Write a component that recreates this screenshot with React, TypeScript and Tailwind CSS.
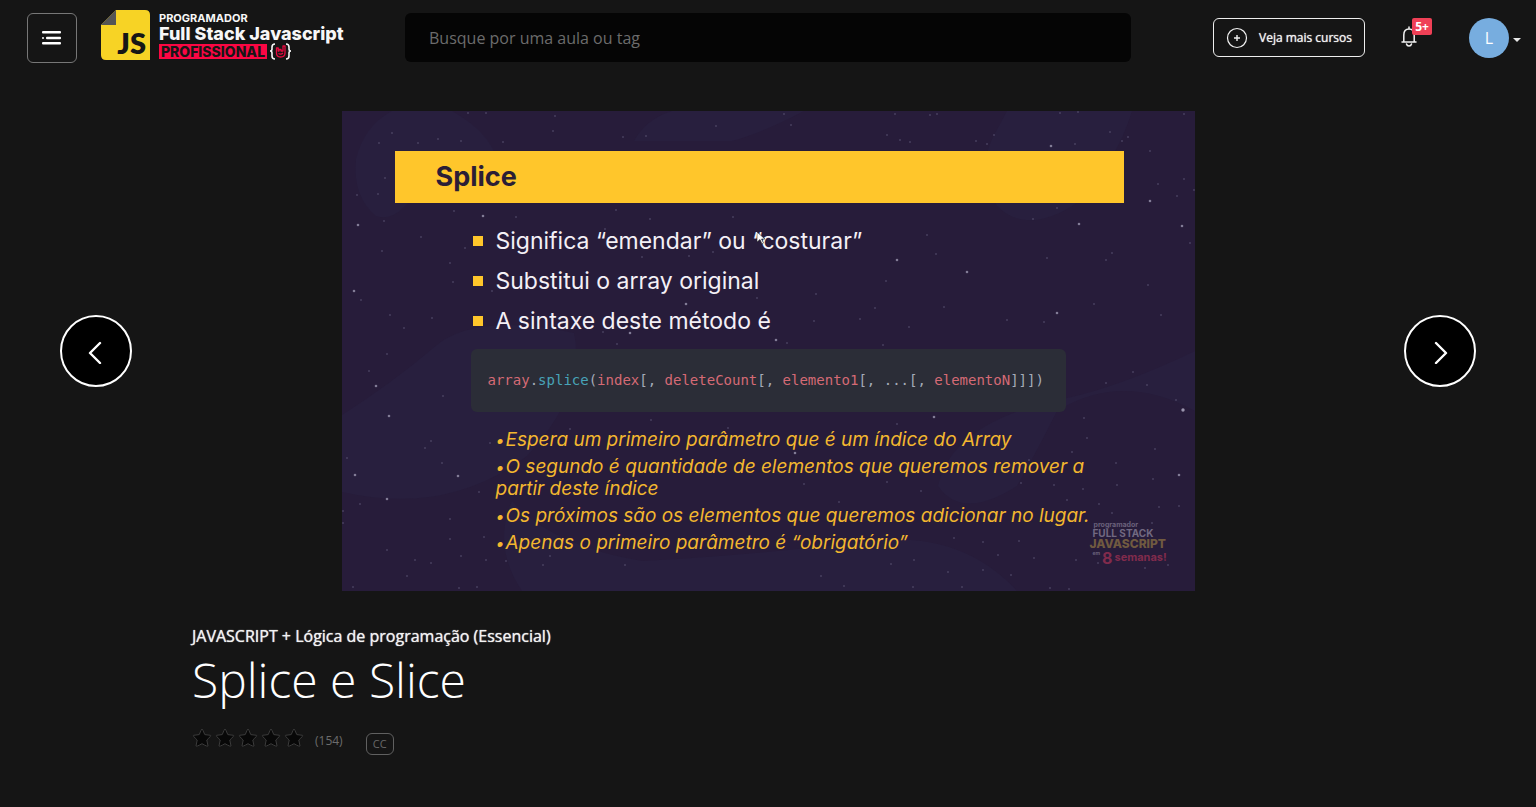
import type { ReactNode } from "react";

type Dot = [number, number, number];

const STARS: Dot[] = [
  [50, 22, 1], [37, 32, 1], [76, 32, 1], [96, 28, 1], [119, 30, 1], [126, 2, 1], [144, 2, 1], [211, 20, 1], [281, 26, 1], [374, 15, 1],
  [304, 25, 1], [213, 5, 1], [161, 31, 1], [43, 67, 1], [15, 84, 1], [36, 83, 1], [16, 114, 2], [42, 110, 1], [79, 126, 1], [112, 100, 1],
  [141, 105, 2], [174, 106, 1], [274, 99, 1], [308, 108, 1], [391, 106, 1], [263, 118, 1], [300, 146, 1], [347, 145, 1], [371, 141, 1],
  [12, 180, 2], [19, 189, 1], [48, 204, 1], [62, 217, 1], [90, 207, 1], [108, 152, 1], [111, 171, 1], [150, 180, 1], [344, 193, 2],
  [415, 187, 1], [261, 221, 1], [288, 222, 2], [275, 233, 1], [40, 140, 1], [123, 137, 1],
  [449, 14, 1], [442, 3, 1], [553, 3, 1], [588, 4, 1], [595, 3, 1], [718, 2, 1], [736, 1, 1], [842, 3, 1], [558, 29, 1], [545, 24, 1],
  [568, 31, 1], [634, 30, 1], [645, 33, 1], [652, 24, 1], [709, 35, 2], [733, 33, 1], [768, 21, 1], [780, 30, 1], [786, 26, 1],
  [808, 40, 1], [816, 73, 1], [808, 90, 2], [835, 85, 1], [842, 68, 1], [852, 79, 1], [737, 113, 2], [840, 115, 2], [848, 132, 1],
  [715, 97, 1], [691, 108, 1], [585, 124, 1], [555, 149, 2], [594, 143, 1], [625, 161, 2], [544, 170, 1], [474, 183, 1], [533, 197, 1],
  [602, 196, 1], [518, 208, 1], [567, 216, 1], [541, 234, 1], [665, 209, 1], [702, 211, 1], [715, 202, 2], [770, 142, 1],
  [764, 149, 1], [806, 174, 1], [819, 204, 1], [752, 193, 1], [705, 147, 1], [472, 210, 1], [445, 232, 1], [434, 229, 2],
  [45, 243, 1], [27, 260, 1], [34, 275, 2], [47, 305, 2], [101, 285, 1], [83, 337, 1], [89, 330, 1], [5, 347, 1], [13, 364, 2],
  [116, 365, 2], [100, 352, 1], [45, 388, 2], [18, 393, 1], [1, 400, 1], [1, 412, 1], [137, 381, 1], [144, 449, 1], [309, 309, 1],
  [228, 318, 1], [386, 317, 1], [148, 332, 1], [108, 408, 1], [108, 428, 1], [142, 426, 1], [45, 439, 1], [73, 449, 1], [89, 452, 1],
  [119, 445, 1], [164, 450, 1], [208, 445, 1], [201, 454, 1], [283, 454, 1], [117, 477, 1], [135, 476, 1], [65, 465, 1], [11, 476, 1],
  [592, 306, 2], [555, 313, 1], [453, 342, 2], [462, 373, 1], [497, 391, 1], [545, 371, 1], [579, 380, 1], [687, 349, 1], [679, 372, 1],
  [712, 374, 1], [741, 378, 1], [725, 389, 1], [774, 352, 1], [730, 341, 1], [745, 327, 1], [742, 307, 1], [805, 274, 1], [791, 261, 1],
  [764, 272, 1], [834, 289, 1], [841, 299, 3], [813, 338, 1], [837, 364, 2], [811, 368, 1], [775, 374, 1], [837, 395, 1], [817, 396, 1],
  [770, 402, 1], [810, 412, 1], [757, 393, 1], [612, 427, 1], [641, 431, 1], [677, 430, 1], [656, 444, 1], [692, 447, 1],
  [734, 449, 1], [756, 452, 1], [803, 457, 1], [826, 454, 1], [549, 453, 1], [572, 449, 1], [606, 461, 1], [641, 459, 1], [669, 464, 1],
  [479, 465, 1], [571, 476, 1], [620, 476, 1], [708, 477, 1], [727, 478, 1], [502, 475, 1],
];

const DOT_LOOK = ["", "#5e5876", "#827c96", "#9a94ad"];
const DOT_RADIUS = [0, 0.8, 1.3, 1.7];

const BULLETS = ["Significa “emendar” ou “costurar”", "Substitui o array original", "A sintaxe deste método é"];

const NOTES = [
  "Espera um primeiro parâmetro que é um índice do Array",
  "O segundo é quantidade de elementos que queremos remover a partir deste índice",
  "Os próximos são os elementos que queremos adicionar no lugar.",
  "Apenas o primeiro parâmetro é “obrigatório”",
];

function Logo() {
  return (
    <a href="#" className="flex items-start gap-2 text-[#f7f7f7]" aria-label="Full Stack Javascript">
      <span className="relative block h-[50px] w-[50px] shrink-0">
        <svg viewBox="0 0 50 50" className="absolute inset-0" aria-hidden="true">
          <path d="M15 0H44Q49 0 49 5V50H5Q0 50 0 45V15Z" fill="#f7d325" />
          <path d="M15 0V15H0Z" fill="#555" />
        </svg>
        <span className="absolute right-[5px] bottom-[5px] font-['Lato',sans-serif] text-[29px] leading-6 font-extrabold text-[#161616]">JS</span>
      </span>
      <span className="flex flex-col font-['Inter',sans-serif] font-bold whitespace-nowrap">
        <span className="mt-[2px] text-[11px] leading-3">PROGRAMADOR</span>
        <span className="text-[18px] leading-[19px] font-extrabold">Full Stack Javascript</span>
        <span className="flex items-center gap-[2px]">
          <span className="w-[108px] bg-[#fb0743] text-center text-[14px] leading-[15px] font-extrabold text-[#161616]">PROFISSIONAL</span>
          <svg width="23" height="17" viewBox="0 0 23 17" fill="none" aria-hidden="true">
            <path d="M6 1Q3 1 3 4V6Q3 8 1 8Q3 8 3 10V13Q3 16 6 16" stroke="#f7f7f7" strokeWidth="1.6" />
            <path d="M17 1Q20 1 20 4V6Q20 8 22 8Q20 8 20 10V13Q20 16 17 16" stroke="#f7f7f7" strokeWidth="1.6" />
            <path d="M7.500 5V10Q7.500 14 11.500 14Q16 14 16 10V3H14V8H12V6.500H10V8H9.200V5Z" stroke="#e80a40" strokeWidth="1.3" strokeLinejoin="round" />
            <path d="M9.500 10.500Q12 12 14 10" stroke="#e80a40" strokeWidth="1.3" />
          </svg>
        </span>
      </span>
    </a>
  );
}

function Header() {
  return (
    <header className="flex items-start pt-[10px] pr-[15px] pl-[27px]">
      <button type="button" aria-label="Menu" className="mt-[3px] mr-6 flex h-[50px] w-[50px] shrink-0 items-center justify-center rounded-md border border-[#777]">
        <svg width="20" height="14" viewBox="0 0 20 14" fill="#fff" aria-hidden="true">
          <rect x="0" y="0" width="19" height="2.400" rx="1" />
          <rect x="0" y="6" width="2" height="2" rx="1" />
          <rect x="4" y="5.800" width="15" height="2.400" rx="1" />
          <rect x="0" y="11" width="19" height="2.400" rx="1" />
        </svg>
      </button>
      <div className="w-[304px] shrink-0">
        <Logo />
      </div>
      <input
        type="search"
        aria-label="Busque por uma aula ou tag"
        placeholder="Busque por uma aula ou tag"
        className="mt-[3px] h-[49px] min-w-0 flex-1 rounded-md bg-[#050505] px-6 text-[16px] text-white placeholder:text-[#6c6c6c] placeholder:opacity-100"
      />
      <button type="button" className="mt-2 ml-[82px] flex h-[39px] w-[152px] shrink-0 items-center gap-[11px] rounded-md border border-[#eee] pl-3 text-[12px] font-medium whitespace-nowrap text-[#f2f2f2] [text-shadow:0_0_1px_#f2f2f2]">
        <svg width="22" height="22" viewBox="0 0 22 22" fill="none" stroke="#f2f2f2" aria-hidden="true">
          <circle cx="11" cy="11" r="9.500" strokeWidth="1.2" />
          <path d="M11 8V14M8 11H14" strokeWidth="1.4" />
        </svg>
        Veja mais cursos
      </button>
      <button type="button" aria-label="Notificações" className="relative mt-4 ml-9 h-[22px] w-4 shrink-0">
        <svg width="16" height="22" viewBox="0 0 16 22" fill="none" stroke="#f2f2f2" strokeWidth="1.500" aria-hidden="true">
          <path d="M8 1V3M1 16H15M2.800 16V9Q2.800 3 8 3Q13.200 3 13.200 9V16M5.500 18Q6 20 8 20Q10 20 10.500 18" strokeLinecap="round" />
        </svg>
        <span className="absolute -top-2 left-[11px] flex h-[17px] w-5 items-center justify-center rounded-xs bg-[#ef4056] text-[12px] font-bold text-white">5+</span>
      </button>
      <button type="button" aria-label="Conta" className="mt-2 ml-[52px] flex shrink-0 items-center gap-1">
        <span className="flex h-10 w-10 items-center justify-center rounded-full bg-[#77addf] text-[16px] text-white">L</span>
        <svg width="8" height="5" viewBox="0 0 8 5" className="mt-1" aria-hidden="true">
          <path d="M0 0H8L4 4Z" fill="#e8e8e8" />
        </svg>
      </button>
    </header>
  );
}

function Arrow({ label, d }: { label: string; d: string }) {
  return (
    <button type="button" aria-label={label} className="flex h-[72px] w-[72px] shrink-0 items-center justify-center rounded-full border-2 border-white bg-black">
      <svg width="24" height="26" viewBox="0 0 24 26" fill="none" stroke="#fff" strokeWidth="2.400" strokeLinecap="round" strokeLinejoin="round" aria-hidden="true">
        <path d={d} />
      </svg>
    </button>
  );
}

function Backdrop() {
  return (
    <svg viewBox="0 0 853 480" preserveAspectRatio="none" className="absolute inset-0 h-full w-full" aria-hidden="true">
      <g fill="#281f3e">
        <path d="M50 0H110Q155 25 158 62Q100 55 62 96Q48 110 34 105Q10 85 14 48Q22 15 50 0Z" />
        <path d="M330 0H462Q420 22 390 30H292Q304 8 330 0Z" />
        <path d="M665 0H790Q775 50 735 92Q685 125 655 95Q635 60 650 28Z" />
        <path d="M0 304Q50 272 90 238Q130 200 232 222Q245 280 185 345Q105 405 0 381Z" />
        <path d="M170 390Q210 435 300 450Q400 445 530 430Q620 420 675 480H180Q150 435 170 390Z" />
        <path d="M853 240Q780 275 725 287Q610 310 596 375Q620 410 675 375Q695 340 715 300Q780 260 853 300Z" />
      </g>
      {STARS.map(([x, y, s]) => (
        <circle key={`${x}-${y}`} cx={x} cy={y} r={DOT_RADIUS[s]} fill={DOT_LOOK[s]} />
      ))}
    </svg>
  );
}

function Name({ children }: { children: ReactNode }) {
  return <span className="text-[#d56a75]">{children}</span>;
}

function Slide() {
  return (
    <section aria-label="Splice" className="relative w-full max-w-[853px] min-w-0 overflow-hidden bg-[#271c3a] pt-10 pr-[71px] pb-[37px] pl-[53px] font-['Inter',sans-serif]">
      <Backdrop />
      <div className="relative">
        <h2 className="bg-[#ffc62b] pl-[41px] text-[27px] leading-[52px] font-bold text-[#2b1e36]">Splice</h2>
        <ul className="mt-[18px] pl-[78px] text-[23px] leading-10 text-[#f4f0f6]">
          {BULLETS.map((text) => (
            <li key={text} className="flex items-center gap-[13px]">
              <span className="h-[10px] w-[10px] shrink-0 bg-[#ffc62b]" />
              {text}
            </li>
          ))}
        </ul>
        <pre className="mt-2 mr-[58px] ml-[76px] rounded-md bg-[#2b2d37] pl-[17px] font-['DejaVu_Sans_Mono',monospace] text-[14px] leading-[63px] text-[#a4abb8]">
          <Name>array</Name>.<span className="text-[#48a3b8]">splice</span>(<Name>index</Name>[, <Name>deleteCount</Name>[, <Name>elemento1</Name>[, ...[, <Name>elementoN</Name>]]])
        </pre>
        <ul className="mt-[17px] -mr-[30px] flex flex-col gap-[5px] pl-[101px] text-[19px] leading-[22px] text-[#f3b72f] italic">
          {NOTES.map((text) => (
            <li key={text} className="max-w-[605px]">
              <span className="inline-block w-[10px] text-[16px] leading-4">•</span>
              {text}
            </li>
          ))}
        </ul>
      </div>
      <div className="absolute right-[26px] bottom-[25px] flex w-[79px] flex-col font-bold whitespace-nowrap" aria-hidden="true">
        <span className="pl-1 text-[7px] leading-[7px] text-[#6a617a]">programador</span>
        <span className="pl-[3px] text-[10px] leading-[10px] text-[#716981]">FULL STACK</span>
        <span className="text-[12px] leading-3 font-extrabold text-[#705a40]">JAVASCRIPT</span>
        <span className="flex items-start gap-[2px] pl-[3px] text-[#812b4c]">
          <span className="text-[5px] leading-[7px] text-[#6a617a]">em</span>
          <span className="text-[16px] leading-4">8</span>
          <span className="text-[11px] leading-[14px]">semanas!</span>
        </span>
      </div>
      <svg width="8" height="13" viewBox="0 0 8 13" className="absolute top-[121px] left-[415px]" aria-hidden="true">
        <path d="M0 0V10L3 7.500L5 12L6.500 11L4.500 7H8Z" fill="#fff" stroke="#222" strokeWidth="0.6" />
      </svg>
    </section>
  );
}

function LessonInfo() {
  return (
    <section className="mx-auto mt-[33px] w-3/4">
      <p className="text-[16px] leading-6 font-medium text-[#f2f2f2] [text-shadow:0_0_1px_#f2f2f2]">JAVASCRIPT + Lógica de programação (Essencial)</p>
      <h1 className="text-[48px] leading-[64px] font-light text-white">Splice e Slice</h1>
      <div className="mt-4 flex items-start">
        <div className="flex gap-[3px]" role="img" aria-label="Avaliação">
          {[1, 2, 3, 4, 5].map((n) => (
            <svg key={n} width="20" height="20" viewBox="0 0 20 20" fill="#080808" stroke="#3b3b3b" strokeLinejoin="round" aria-hidden="true">
              <path d="M10 1Q10.500 1 12.800 6.600L18.500 7.300Q19.500 7.800 14.800 12L16 18Q15.800 19 10 15.700Q4.200 19 4 18L5.200 12Q0.500 7.800 1.500 7.300L7.200 6.600Q9.500 1 10 1Z" />
            </svg>
          ))}
        </div>
        <span className="mt-[3px] ml-[11px] text-[12px] leading-5 text-[#6c6c6c]">(154)</span>
        <span className="mt-[5px] ml-[23px] flex h-[22px] w-7 items-center justify-center rounded-md border border-[#606060] text-[11px] text-[#686868]">CC</span>
      </div>
    </section>
  );
}

export default function App() {
  return (
    <div className="min-h-screen bg-[#151515] font-['Open_Sans',sans-serif]">
      <Header />
      <main className="pt-12">
        <div className="flex items-center justify-between gap-6 px-[60px]">
          <Arrow label="Aula anterior" d="M16 5L6 15L16 25" />
          <Slide />
          <Arrow label="Próxima aula" d="M8 5L18 15L8 25" />
        </div>
        <LessonInfo />
      </main>
    </div>
  );
}
